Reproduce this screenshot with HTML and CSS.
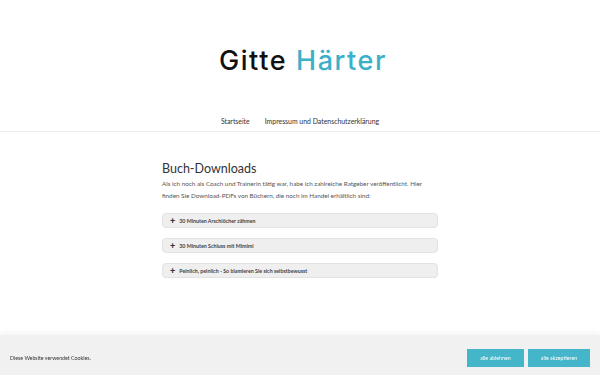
FILE: index.html
```html
<!DOCTYPE html>
<html lang="de">
<head>
    <meta charset="UTF-8">
    <meta name="viewport" content="width=device-width, initial-scale=1.0">
    <title>Buch-Downloads - Gitte Härter</title>
    <link rel="stylesheet" href="styles.css">
</head>
<body>
    <header class="site-header">
        <div class="logo">Gitte <span class="logo-accent">Härter</span></div>
        <nav class="main-nav">
            <a href="#">Startseite</a>
            <a href="#">Impressum und Datenschutzerklärung</a>
        </nav>
    </header>

    <main class="content">
        <h1 class="page-title">Buch-Downloads</h1>
        <p class="intro">Als ich noch als Coach und Trainerin tätig war, habe ich zahlreiche Ratgeber veröffentlicht. Hier finden Sie Download-PDFs von Büchern, die noch im Handel erhältlich sind:</p>

        <div class="accordion">
            <div class="acc-item"><span class="plus">+</span>30 Minuten Arschlöcher zähmen</div>
            <div class="acc-item"><span class="plus">+</span>30 Minuten Schluss mit Mimimi</div>
            <div class="acc-item"><span class="plus">+</span>Peinlich, peinlich - So blamieren Sie sich selbstbewusst</div>
        </div>
    </main>

    <div class="cookie-bar">
        <span class="cookie-text">Diese Website verwendet Cookies.</span>
        <div class="cookie-buttons">
            <button class="btn">alle ablehnen</button>
            <button class="btn">alle akzeptieren</button>
        </div>
    </div>
</body>
</html>
```

FILE: styles.css
```css
body { margin: 0; font-family: Lato, "Open Sans", sans-serif; color: #333; background: #fff; }

.site-header { border-bottom: 1px solid #ececec; }
.logo { text-align: center; font-family: Inter, sans-serif; font-weight: 500; font-size: 27px; letter-spacing: 1.6px; color: #111; padding: 46px 0 0 6px; line-height: 30px; }
.logo-accent { color: #3bb0c9; }
.main-nav { display: flex; justify-content: center; gap: 15px; padding: 39px 0 4px; }
.main-nav a { font-size: 6.9px; color: #333; text-decoration: none; line-height: 12px; }

.content { width: 276px; margin: 0 auto; padding-top: 28px; }
.page-title { font-size: 12.5px; font-weight: 400; color: #333; margin: 0; line-height: 18px; }
.intro { font-size: 6.3px; line-height: 12px; color: #555; margin: 0 0 11px; }

.accordion { display: flex; flex-direction: column; gap: 10px; }
.acc-item { background: #efefef; border: 1px solid #e2e2e2; border-radius: 4px; height: 15px; box-sizing: border-box; display: flex; align-items: center; padding: 0 7px; font-size: 5.3px; font-weight: 700; color: #444; }
.plus { font-size: 9px; font-weight: 900; margin-right: 4px; color: #333; line-height: 1; }

.cookie-bar { position: fixed; left: 0; right: 0; bottom: 0; height: 40px; background: #f1f1f1; box-shadow: 0 -2px 6px rgba(0, 0, 0, 0.05); display: flex; align-items: center; justify-content: space-between; padding: 0 10px; box-sizing: border-box; }
.cookie-text { font-size: 5.3px; color: #333; padding-top: 6px; }
.cookie-buttons { display: flex; gap: 4px; padding-top: 6px; }
.btn { background: #45b5ca; color: #fff; border: none; font-family: inherit; font-size: 5.3px; height: 18px; padding: 0; }
.btn:first-child { width: 57px; }
.btn:last-child { width: 62px; }
```
